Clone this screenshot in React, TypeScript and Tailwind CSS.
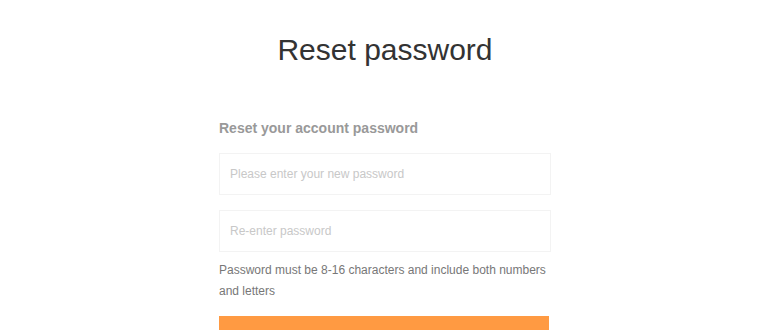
export default function App() {
  return (
    <div
      className="min-h-[330px] bg-white"
      style={{ fontFamily: "'Liberation Sans', Arial, sans-serif" }}
    >
      <h1 className="pt-[32px] text-center text-[30px] leading-[36px] text-[#333]">
        Reset password
      </h1>

      <form className="mx-auto mt-[50px] w-[332px]">
        <p className="text-[14px] font-bold leading-[20px] text-[#999]">
          Reset your account password
        </p>

        <input
          type="password"
          placeholder="Please enter your new password"
          className="mt-[15px] block h-[42px] w-full border border-[#f3f3f3] px-[10px] text-[12px] text-[#333] outline-none placeholder:text-[#c8c8c8]"
        />
        <input
          type="password"
          placeholder="Re-enter password"
          className="mt-[15px] block h-[42px] w-full border border-[#f3f3f3] px-[10px] text-[12px] text-[#333] outline-none placeholder:text-[#c8c8c8]"
        />

        <p className="mt-[8px] text-[12px] leading-[21px] text-[#777]">
          Password must be 8-16 characters and include both numbers and letters
        </p>

        <button
          type="button"
          className="mt-[14px] block h-[46px] w-[330px] bg-[#ff9a42] text-[15px] text-white"
        >
          Confirm
        </button>
      </form>
    </div>
  );
}
